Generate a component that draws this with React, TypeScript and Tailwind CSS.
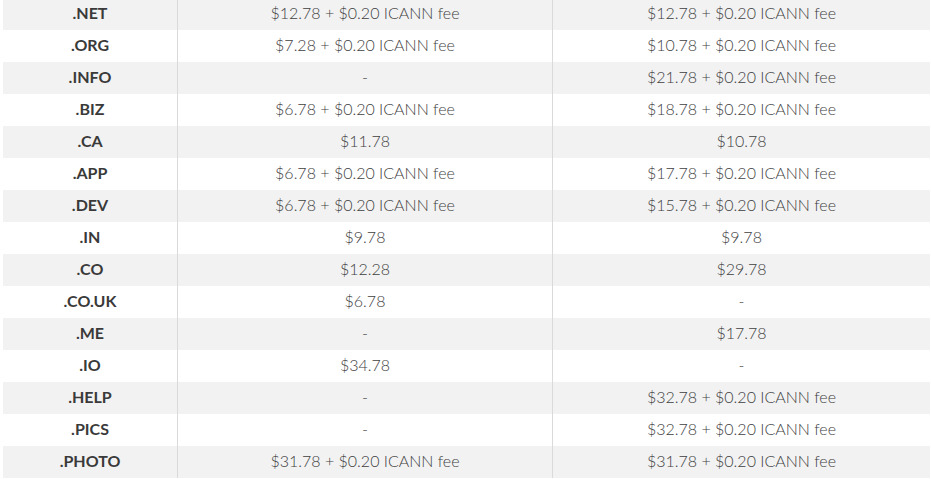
const rows: [string, string, string][] = [
  [".NET", "$12.78 + $0.20 ICANN fee", "$12.78 + $0.20 ICANN fee"],
  [".ORG", "$7.28 + $0.20 ICANN fee", "$10.78 + $0.20 ICANN fee"],
  [".INFO", "-", "$21.78 + $0.20 ICANN fee"],
  [".BIZ", "$6.78 + $0.20 ICANN fee", "$18.78 + $0.20 ICANN fee"],
  [".CA", "$11.78", "$10.78"],
  [".APP", "$6.78 + $0.20 ICANN fee", "$17.78 + $0.20 ICANN fee"],
  [".DEV", "$6.78 + $0.20 ICANN fee", "$15.78 + $0.20 ICANN fee"],
  [".IN", "$9.78", "$9.78"],
  [".CO", "$12.28", "$29.78"],
  [".CO.UK", "$6.78", "-"],
  [".ME", "-", "$17.78"],
  [".IO", "$34.78", "-"],
  [".HELP", "-", "$32.78 + $0.20 ICANN fee"],
  [".PICS", "-", "$32.78 + $0.20 ICANN fee"],
  [".PHOTO", "$31.78 + $0.20 ICANN fee", "$31.78 + $0.20 ICANN fee"],
];

export default function App() {
  return (
    <div className="bg-white w-[931px] h-[479px] overflow-hidden pl-[3px] font-['Lato',sans-serif] text-[16px]">
      <div className="mt-[-2px] w-[927px]">
        {rows.map(([tld, renew, transfer], i) => (
          <div
            key={tld}
            className={`flex h-[32px] items-center ${i % 2 === 0 ? "bg-[#f2f2f2]" : "bg-white"}`}
          >
            <div className="w-[174px] h-full pb-[2px] flex items-center justify-center font-bold text-[#3a3a3a]">
              {tld}
            </div>
            <div className="w-[375px] h-full pb-[2px] flex items-center justify-center border-l border-[#dadada] font-light text-[#3f3f3f]">
              {renew}
            </div>
            <div className="flex-1 h-full pb-[2px] flex items-center justify-center border-l border-[#dadada] font-light text-[#3f3f3f]">
              {transfer}
            </div>
          </div>
        ))}
      </div>
    </div>
  );
}
